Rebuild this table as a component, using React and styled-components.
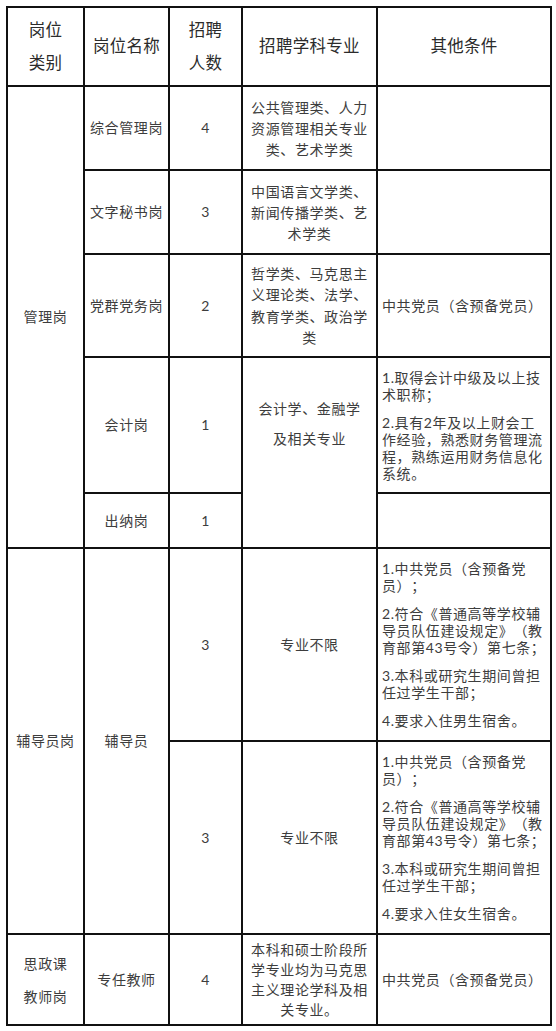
import React from "react";
import styled, { createGlobalStyle } from "styled-components";

const GlobalStyle = createGlobalStyle`
  html, body {
    margin: 0;
    padding: 0;
    background: #fff;
  }
  body {
    font-family: "Lato", "Noto Sans CJK SC", sans-serif;
    text-spacing-trim: space-all;
  }
`;

const Page = styled.div`
  padding: 6px 4px 6px 6px;
  background: #fff;
`;

const Table = styled.table`
  width: 546px;
  border-collapse: collapse;
  table-layout: fixed;
`;

const Col = styled.col`
  width: ${(p) => p.$w}px;
`;

const Row = styled.tr`
  height: ${(p) => p.$h}px;
`;

const HeadCell = styled.th`
  border: 2px solid #111;
  padding: 0 4px;
  font-size: 16.5px;
  font-weight: normal;
  line-height: 33px;
  letter-spacing: 0.3px;
  color: #2b2b2b;
  text-align: center;
  vertical-align: middle;
`;

const Cell = styled.td`
  border: 2px solid #111;
  padding: 0 ${(p) => (p.$left ? "4px" : "5px")};
  padding-bottom: ${(p) => p.$shift || 0}px;
  font-size: 14px;
  line-height: ${(p) => p.$lh || 20}px;
  letter-spacing: 0.6px;
  color: #3d3d3d;
  text-align: ${(p) => (p.$left ? "left" : "center")};
  vertical-align: middle;
  white-space: nowrap;
  text-spacing-trim: space-all;
`;

const Line = styled.span`
  display: block;
`;

const Para = styled.p`
  margin: 0 0 11px;
  line-height: 17px;
  &:last-child {
    margin-bottom: 0;
  }
`;

const Lines = ({ items }) => items.map((t) => <Line key={t}>{t}</Line>);

const Paras = ({ items }) =>
  items.map((lines, i) => (
    <Para key={i}>
      <Lines items={lines} />
    </Para>
  ));

const counselor = (dorm) => [
  ["1.中共党员（含预备党", "员）；"],
  ["2.符合《普通高等学校辅", "导员队伍建设规定》（教", "育部第43号令）第七条；"],
  ["3.本科或研究生期间曾担", "任过学生干部；"],
  [`4.要求入住${dorm}生宿舍。`],
];

export default function App() {
  return (
    <Page>
      <GlobalStyle />
      <Table>
        <colgroup>
          <Col $w={77} />
          <Col $w={85} />
          <Col $w={73} />
          <Col $w={135} />
          <Col $w={174} />
        </colgroup>
        <thead>
          <Row $h={79}>
            <HeadCell>
              <Lines items={["岗位", "类别"]} />
            </HeadCell>
            <HeadCell>岗位名称</HeadCell>
            <HeadCell>
              <Lines items={["招聘", "人数"]} />
            </HeadCell>
            <HeadCell>招聘学科专业</HeadCell>
            <HeadCell>其他条件</HeadCell>
          </Row>
        </thead>
        <tbody>
          <Row $h={84}>
            <Cell rowSpan={5}>管理岗</Cell>
            <Cell>综合管理岗</Cell>
            <Cell>4</Cell>
            <Cell $lh={21}>
              <Lines items={["公共管理类、人力", "资源管理相关专业", "类、艺术学类"]} />
            </Cell>
            <Cell $left />
          </Row>
          <Row $h={84}>
            <Cell>文字秘书岗</Cell>
            <Cell>3</Cell>
            <Cell $lh={21}>
              <Lines items={["中国语言文学类、", "新闻传播学类、艺", "术学类"]} />
            </Cell>
            <Cell $left />
          </Row>
          <Row $h={103}>
            <Cell>党群党务岗</Cell>
            <Cell>2</Cell>
            <Cell $lh={21.5}>
              <Lines
                items={["哲学类、马克思主", "义理论类、法学、", "教育学类、政治学", "类"]}
              />
            </Cell>
            <Cell $left>中共党员（含预备党员）</Cell>
          </Row>
          <Row $h={136}>
            <Cell>会计岗</Cell>
            <Cell>1</Cell>
            <Cell rowSpan={2} $lh={30} $shift={58}>
              <Lines items={["会计学、金融学", "及相关专业"]} />
            </Cell>
            <Cell $left>
              <Paras
                items={[
                  ["1.取得会计中级及以上技", "术职称；"],
                  ["2.具有2年及以上财会工", "作经验，熟悉财务管理流", "程，熟练运用财务信息化", "系统。"],
                ]}
              />
            </Cell>
          </Row>
          <Row $h={55}>
            <Cell>出纳岗</Cell>
            <Cell>1</Cell>
            <Cell $left />
          </Row>
          <Row $h={193}>
            <Cell rowSpan={2}>辅导员岗</Cell>
            <Cell rowSpan={2}>辅导员</Cell>
            <Cell>3</Cell>
            <Cell>专业不限</Cell>
            <Cell $left>
              <Paras items={counselor("男")} />
            </Cell>
          </Row>
          <Row $h={193}>
            <Cell>3</Cell>
            <Cell>专业不限</Cell>
            <Cell $left>
              <Paras items={counselor("女")} />
            </Cell>
          </Row>
          <Row $h={91}>
            <Cell $lh={33}>
              <Lines items={["思政课", "教师岗"]} />
            </Cell>
            <Cell>专任教师</Cell>
            <Cell>4</Cell>
            <Cell $lh={20}>
              <Lines
                items={["本科和硕士阶段所", "学专业均为马克思", "主义理论学科及相", "关专业。"]}
              />
            </Cell>
            <Cell $left>中共党员（含预备党员）</Cell>
          </Row>
        </tbody>
      </Table>
    </Page>
  );
}
